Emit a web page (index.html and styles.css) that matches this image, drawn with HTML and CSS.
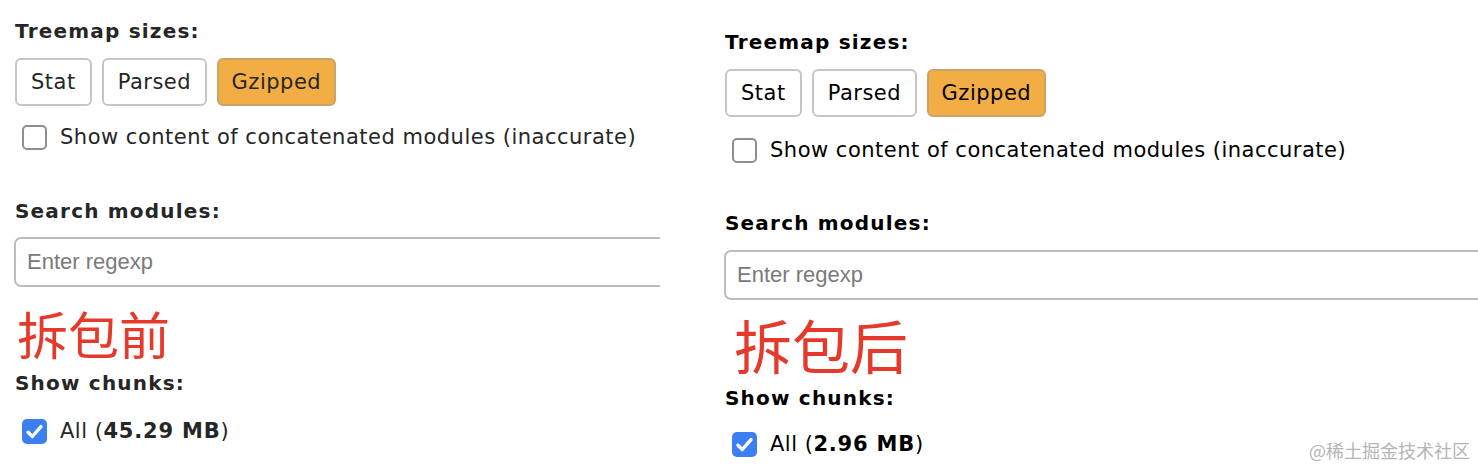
FILE: index.html
```html
<!DOCTYPE html>
<html lang="zh">
<head>
<meta charset="utf-8">
<title>Treemap sizes</title>
<link rel="stylesheet" href="styles.css">
</head>
<body>
<div class="page">
  <section class="panel panel-before">
    <h3 class="label label-top">Treemap sizes:</h3>
    <div class="btn-row">
      <button class="btn">Stat</button>
      <button class="btn">Parsed</button>
      <button class="btn btn-active">Gzipped</button>
    </div>
    <label class="check-row check-concat">
      <input type="checkbox" class="check">
      <span>Show content of concatenated modules (inaccurate)</span>
    </label>
    <h3 class="label label-search">Search modules:</h3>
    <div class="input-wrap">
      <input type="text" class="search" placeholder="Enter regexp">
    </div>
    <div class="note">拆包前</div>
    <h3 class="label label-chunks">Show chunks:</h3>
    <label class="check-row check-all">
      <input type="checkbox" class="check" checked>
      <span>All (<b>45.29 MB</b>)</span>
    </label>
  </section>

  <section class="panel panel-after">
    <h3 class="label label-top">Treemap sizes:</h3>
    <div class="btn-row">
      <button class="btn">Stat</button>
      <button class="btn">Parsed</button>
      <button class="btn btn-active">Gzipped</button>
    </div>
    <label class="check-row check-concat">
      <input type="checkbox" class="check">
      <span>Show content of concatenated modules (inaccurate)</span>
    </label>
    <h3 class="label label-search">Search modules:</h3>
    <div class="input-wrap">
      <input type="text" class="search" placeholder="Enter regexp">
    </div>
    <div class="note">拆包后</div>
    <h3 class="label label-chunks">Show chunks:</h3>
    <label class="check-row check-all">
      <input type="checkbox" class="check" checked>
      <span>All (<b>2.96 MB</b>)</span>
    </label>
  </section>
</div>
<div class="watermark">@稀土掘金技术社区</div>
</body>
</html>
```

FILE: styles.css
```css
* { box-sizing: border-box; }

html, body {
  margin: 0;
  padding: 0;
  background: #fff;
  width: 1478px;
  height: 468px;
  overflow: hidden;
}

body {
  position: relative;
  font-family: "DejaVu Sans", Verdana, sans-serif;
  font-size: 21px;
  letter-spacing: 0.5px;
}

.page {
  display: flex;
  gap: 50px;
  height: 468px;
}

.panel {
  display: flex;
  flex-direction: column;
  overflow: hidden;
}

.panel-before {
  width: 660px;
  padding-left: 14px;
  color: #262626;
}

.panel-after {
  flex: 1;
  padding-left: 14px;
  color: #000;
}

.label {
  margin: 0;
  font-size: 20px;
  font-weight: bold;
  line-height: 24px;
  letter-spacing: 1.2px;
  padding-left: 1px;
}

.btn-row {
  display: flex;
  gap: 10px;
  padding-left: 1px;
  margin-top: 15px;
}

.btn {
  height: 48px;
  padding: 0 14px;
  font-family: "DejaVu Sans", Verdana, sans-serif;
  font-size: 21px;
  letter-spacing: 0.5px;
  color: inherit;
  background: #fff;
  border: 2px solid #c6c6c6;
  border-radius: 6px;
}

.btn-active {
  padding: 0 12.5px;
  background: #f2ae45;
  border-color: #c9a46a;
}

.check-row {
  display: flex;
  align-items: center;
  gap: 13px;
  height: 34px;
  padding-left: 8px;
  line-height: 24px;
}

.check {
  appearance: none;
  -webkit-appearance: none;
  margin: 0;
  width: 25px;
  height: 25px;
  flex: none;
  border: 2px solid #8e8e8e;
  border-radius: 5px;
  background: #fff;
}

.check:checked {
  border: none;
  background-color: #3b7ff2;
  background-image: url("data:image/svg+xml,%3Csvg xmlns='http://www.w3.org/2000/svg' viewBox='0 0 25 25'%3E%3Cpath d='M6 13.2l4.3 4.3L19 7.6' fill='none' stroke='%23fff' stroke-width='3.4' stroke-linecap='round' stroke-linejoin='round'/%3E%3C/svg%3E");
  background-size: 25px 25px;
}

.input-wrap {
  display: flex;
}

.search {
  width: 100%;
  min-width: 800px;
  height: 50px;
  border: 2px solid #bdbdbd;
  border-radius: 7px;
  padding: 0 11px;
  font-family: "Liberation Sans", Arial, sans-serif;
  font-size: 22px;
  letter-spacing: 0;
  color: #333;
  background: #fff;
  outline: none;
}

.search::placeholder {
  color: #7a7a7a;
}

.note {
  font-family: "Noto Sans CJK SC", sans-serif;
  color: #e4392b;
  letter-spacing: 0;
}

.check-all b {
  font-weight: bold;
  letter-spacing: 0.8px;
}

/* before panel vertical rhythm */
.panel-before .label-top { margin-top: 19px; }
.panel-before .check-concat { margin-top: 14px; }
.panel-before .label-search { margin-top: 45px; }
.panel-before .input-wrap { margin-top: 14px; }
.panel-before .note { margin-top: 18px; font-size: 51px; line-height: 56px; padding-left: 3px; }
.panel-before .label-chunks { margin-top: 10px; }
.panel-before .check-all { margin-top: 19px; }
.panel-before .search { border-right: none; border-radius: 7px 0 0 7px; }

/* after panel vertical rhythm */
.panel-after .label-top { margin-top: 30px; }
.panel-after .check-concat { margin-top: 16px; }
.panel-after .label-search { margin-top: 44px; }
.panel-after .input-wrap { margin-top: 15px; }
.panel-after .note { margin-top: 14px; font-size: 58px; line-height: 60px; padding-left: 10px; }
.panel-after .label-chunks { margin-top: 12px; }
.panel-after .check-all { margin-top: 17px; }

.watermark {
  position: absolute;
  right: 8px;
  bottom: 6px;
  font-family: "Noto Sans CJK SC", sans-serif;
  font-size: 18px;
  letter-spacing: 0;
  color: #b5b5b5;
  line-height: 24px;
}
```
